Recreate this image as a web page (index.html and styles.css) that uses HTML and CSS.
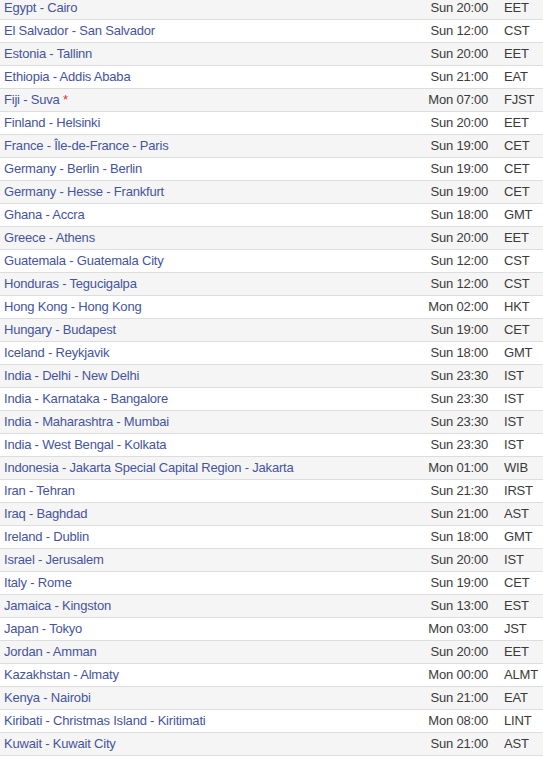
FILE: index.html
```html
<!DOCTYPE html>
<html>
<head>
<meta charset="utf-8">
<link rel="stylesheet" href="styles.css">
</head>
<body>
<table class="tz">
<tbody>
<tr><td class="place"><a href="#">Egypt - Cairo</a></td><td class="time">Sun 20:00</td><td class="zone">EET</td></tr>
<tr><td class="place"><a href="#">El Salvador - San Salvador</a></td><td class="time">Sun 12:00</td><td class="zone">CST</td></tr>
<tr><td class="place"><a href="#">Estonia - Tallinn</a></td><td class="time">Sun 20:00</td><td class="zone">EET</td></tr>
<tr><td class="place"><a href="#">Ethiopia - Addis Ababa</a></td><td class="time">Sun 21:00</td><td class="zone">EAT</td></tr>
<tr><td class="place"><a href="#">Fiji - Suva</a> <span class="dst">*</span></td><td class="time">Mon 07:00</td><td class="zone">FJST</td></tr>
<tr><td class="place"><a href="#">Finland - Helsinki</a></td><td class="time">Sun 20:00</td><td class="zone">EET</td></tr>
<tr><td class="place"><a href="#">France - Île-de-France - Paris</a></td><td class="time">Sun 19:00</td><td class="zone">CET</td></tr>
<tr><td class="place"><a href="#">Germany - Berlin - Berlin</a></td><td class="time">Sun 19:00</td><td class="zone">CET</td></tr>
<tr><td class="place"><a href="#">Germany - Hesse - Frankfurt</a></td><td class="time">Sun 19:00</td><td class="zone">CET</td></tr>
<tr><td class="place"><a href="#">Ghana - Accra</a></td><td class="time">Sun 18:00</td><td class="zone">GMT</td></tr>
<tr><td class="place"><a href="#">Greece - Athens</a></td><td class="time">Sun 20:00</td><td class="zone">EET</td></tr>
<tr><td class="place"><a href="#">Guatemala - Guatemala City</a></td><td class="time">Sun 12:00</td><td class="zone">CST</td></tr>
<tr><td class="place"><a href="#">Honduras - Tegucigalpa</a></td><td class="time">Sun 12:00</td><td class="zone">CST</td></tr>
<tr><td class="place"><a href="#">Hong Kong - Hong Kong</a></td><td class="time">Mon 02:00</td><td class="zone">HKT</td></tr>
<tr><td class="place"><a href="#">Hungary - Budapest</a></td><td class="time">Sun 19:00</td><td class="zone">CET</td></tr>
<tr><td class="place"><a href="#">Iceland - Reykjavik</a></td><td class="time">Sun 18:00</td><td class="zone">GMT</td></tr>
<tr><td class="place"><a href="#">India - Delhi - New Delhi</a></td><td class="time">Sun 23:30</td><td class="zone">IST</td></tr>
<tr><td class="place"><a href="#">India - Karnataka - Bangalore</a></td><td class="time">Sun 23:30</td><td class="zone">IST</td></tr>
<tr><td class="place"><a href="#">India - Maharashtra - Mumbai</a></td><td class="time">Sun 23:30</td><td class="zone">IST</td></tr>
<tr><td class="place"><a href="#">India - West Bengal - Kolkata</a></td><td class="time">Sun 23:30</td><td class="zone">IST</td></tr>
<tr><td class="place"><a href="#">Indonesia - Jakarta Special Capital Region - Jakarta</a></td><td class="time">Mon 01:00</td><td class="zone">WIB</td></tr>
<tr><td class="place"><a href="#">Iran - Tehran</a></td><td class="time">Sun 21:30</td><td class="zone">IRST</td></tr>
<tr><td class="place"><a href="#">Iraq - Baghdad</a></td><td class="time">Sun 21:00</td><td class="zone">AST</td></tr>
<tr><td class="place"><a href="#">Ireland - Dublin</a></td><td class="time">Sun 18:00</td><td class="zone">GMT</td></tr>
<tr><td class="place"><a href="#">Israel - Jerusalem</a></td><td class="time">Sun 20:00</td><td class="zone">IST</td></tr>
<tr><td class="place"><a href="#">Italy - Rome</a></td><td class="time">Sun 19:00</td><td class="zone">CET</td></tr>
<tr><td class="place"><a href="#">Jamaica - Kingston</a></td><td class="time">Sun 13:00</td><td class="zone">EST</td></tr>
<tr><td class="place"><a href="#">Japan - Tokyo</a></td><td class="time">Mon 03:00</td><td class="zone">JST</td></tr>
<tr><td class="place"><a href="#">Jordan - Amman</a></td><td class="time">Sun 20:00</td><td class="zone">EET</td></tr>
<tr><td class="place"><a href="#">Kazakhstan - Almaty</a></td><td class="time">Mon 00:00</td><td class="zone">ALMT</td></tr>
<tr><td class="place"><a href="#">Kenya - Nairobi</a></td><td class="time">Sun 21:00</td><td class="zone">EAT</td></tr>
<tr><td class="place"><a href="#">Kiribati - Christmas Island - Kiritimati</a></td><td class="time">Mon 08:00</td><td class="zone">LINT</td></tr>
<tr><td class="place"><a href="#">Kuwait - Kuwait City</a></td><td class="time">Sun 21:00</td><td class="zone">AST</td></tr>
</tbody>
</table>
</body>
</html>
```

FILE: styles.css
```css
html, body {
  margin: 0;
  padding: 0;
  background: #fff;
}
body {
  font-family: "Liberation Sans", Arial, sans-serif;
  font-size: 13px;
  letter-spacing: -0.2px;
  color: #3a3a3a;
  overflow: hidden;
}
.tz {
  width: 100%;
  border-collapse: collapse;
  margin-top: -3px;
}
.tz td {
  padding: 3px 4px;
  line-height: 16px;
  border-bottom: 1px solid #ddd;
  white-space: nowrap;
}
.tz tr:nth-child(odd) td {
  background: #f5f5f5;
}
.place a {
  color: #45549f;
  text-decoration: none;
}
.dst {
  color: #d33;
}
.time {
  text-align: right;
  padding-right: 12px !important;
  width: 70px;
}
.zone {
  width: 35px;
}
```
